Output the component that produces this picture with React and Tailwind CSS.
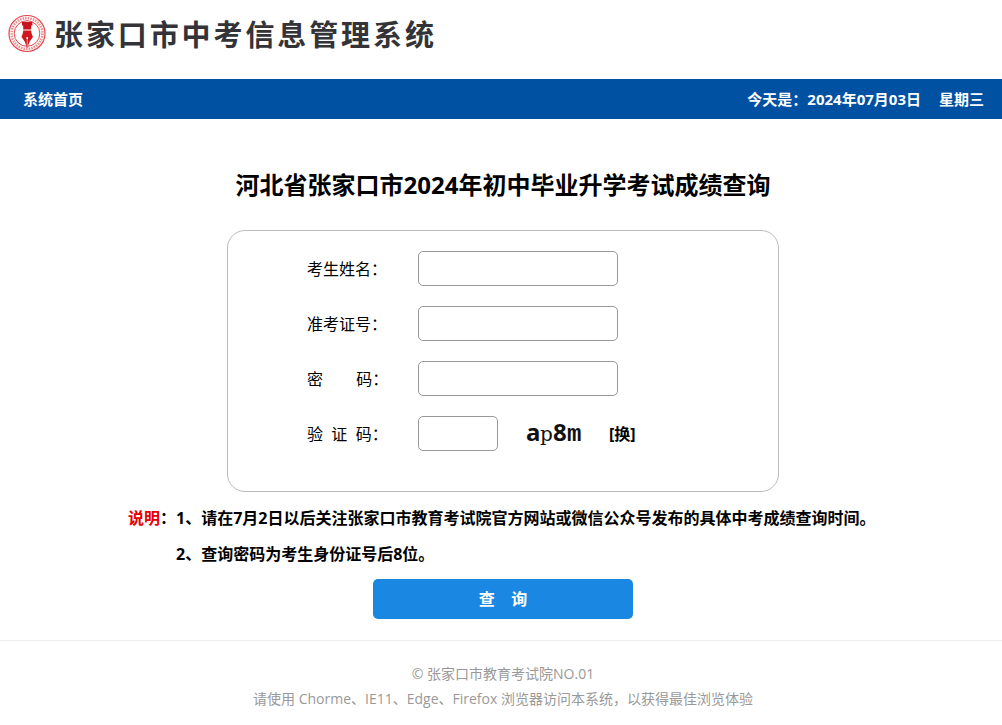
import React, { useState } from 'react';

const FIELDS = [
  { id: 'name', label: '考生姓名：', type: 'text' },
  { id: 'ticket', label: '准考证号：', type: 'text' },
  { id: 'password', label: '密\u00a0\u00a0\u00a0\u00a0\u00a0\u00a0\u00a0\u00a0码：', type: 'password' },
];

const INPUT = 'h-[35px] rounded-[5px] border border-[#999] bg-white px-2 text-base focus:outline-none focus:border-[#1a87e2]';

export default function App() {
  const [form, setForm] = useState({ name: '', ticket: '', password: '', code: '' });

  const handleChange = (e) => {
    setForm({ ...form, [e.target.id]: e.target.value });
  };

  return (
    <div className="bg-white text-black font-['Open_Sans','Noto_Sans_CJK_SC',sans-serif]" lang="zh-CN">
      {/* Header */}
      <header className="flex h-[79px] items-start gap-[6px] px-2 pt-[14px]">
        <Emblem />
        <p className="text-[29px] leading-[42px] font-bold tracking-widest text-[#333338]">张家口市中考信息管理系统</p>
      </header>

      {/* Navigation */}
      <nav className="flex h-10 items-center justify-between bg-[#0051a2] pr-[18px] pl-[23px] text-[15px] leading-5 font-bold text-white">
        <a href="#">系统首页</a>
        <div className="flex gap-[18px]">
          <span>今天是：2024年07月03日</span>
          <span>星期三</span>
        </div>
      </nav>

      <main className="pt-12 pb-[21px] pl-1">
        <h1 className="text-center text-2xl leading-9 font-bold">河北省张家口市2024年初中毕业升学考试成绩查询</h1>

        <form onSubmit={(e) => e.preventDefault()}>
          <div className="mx-auto mt-[27px] flex max-w-[552px] flex-col gap-5 rounded-[18px] border border-[#bbb] px-[79px] pt-5 pb-10">
            {FIELDS.map((field) => (
              <div key={field.id} className="flex items-center">
                <label htmlFor={field.id} className="w-[111px] text-base">{field.label}</label>
                <input
                  id={field.id}
                  type={field.type}
                  value={form[field.id]}
                  onChange={handleChange}
                  className={`${INPUT} w-[200px]`}
                />
              </div>
            ))}

            {/* Captcha */}
            <div className="flex h-[35px] items-center">
              <label htmlFor="code" className="w-[111px] text-base">验&nbsp;&nbsp;证&nbsp;&nbsp;码：</label>
              <input id="code" type="text" value={form.code} onChange={handleChange} className={`${INPUT} w-20`} />
              <span className="ml-7 flex w-[56px] items-baseline text-[#111]">
                <span className="w-[14px] font-['Noto_Sans'] text-2xl leading-8 font-bold">a</span>
                <span className="w-[13px] font-['DejaVu_Serif'] text-xl leading-8">p</span>
                <span className="w-[14px] font-['Noto_Sans'] text-2xl leading-8 font-bold">8</span>
                <span className="w-[14px] font-['Liberation_Mono'] text-2xl leading-8 font-bold">m</span>
              </span>
              <button type="button" className="ml-[27px] text-base font-bold">[换]</button>
            </div>
          </div>

          {/* Notes */}
          <div className="mx-auto mt-2 flex max-w-[750px] text-base leading-9 font-bold">
            <p className="shrink-0"><span className="text-[#e60000]">说明</span>：</p>
            <div>
              <p>1、请在7月2日以后关注张家口市教育考试院官方网站或微信公众号发布的具体中考成绩查询时间。</p>
              <p>2、查询密码为考生身份证号后8位。</p>
            </div>
          </div>

          <button
            type="submit"
            className="mx-auto mt-[7px] block h-10 w-[260px] rounded-[5px] bg-[#1a87e2] text-base font-bold text-white"
          >
            查&nbsp;&nbsp;&nbsp;&nbsp;询
          </button>
        </form>
      </main>

      <footer className="border-t border-[#eee] pt-5 pb-3 pl-1 text-center text-sm leading-[25px] text-[#999]">
        <p>© 张家口市教育考试院NO.01</p>
        <p>请使用 Chorme、IE11、Edge、Firefox 浏览器访问本系统，以获得最佳浏览体验</p>
      </footer>
    </div>
  );
}

function Emblem() {
  return (
    <svg viewBox="0 0 40 40" className="size-10 shrink-0" aria-hidden="true">
      <circle cx="19" cy="19.5" r="18" fill="#fff" stroke="#e0484d" strokeWidth="1.2" />
      <circle cx="19" cy="19.5" r="15.4" fill="none" stroke="#e0484d" strokeWidth="2.6" strokeDasharray="1.6 1" opacity="0.6" />
      <circle cx="19" cy="19.5" r="12.8" fill="none" stroke="#e0484d" strokeWidth="1" />
      {/* pen nib */}
      <path d="M14 8h10.400v3.500h-1.200v4h-8v-4H14z" fill="#c8141c" />
      <path d="M15.200 16.500h8c0 3 1.200 5 1.800 6.500-2.400 3-4.300 5-5 10.500h-1.600c-.7-5.500-2.600-7.500-5-10.500.6-1.500 1.800-3.500 1.800-6.500z" fill="#d0161e" />
      <path d="M19.200 33v-8" stroke="#fff" strokeWidth=".6" />
      <circle cx="19.200" cy="24" r="1" fill="#fff" />
    </svg>
  );
}
